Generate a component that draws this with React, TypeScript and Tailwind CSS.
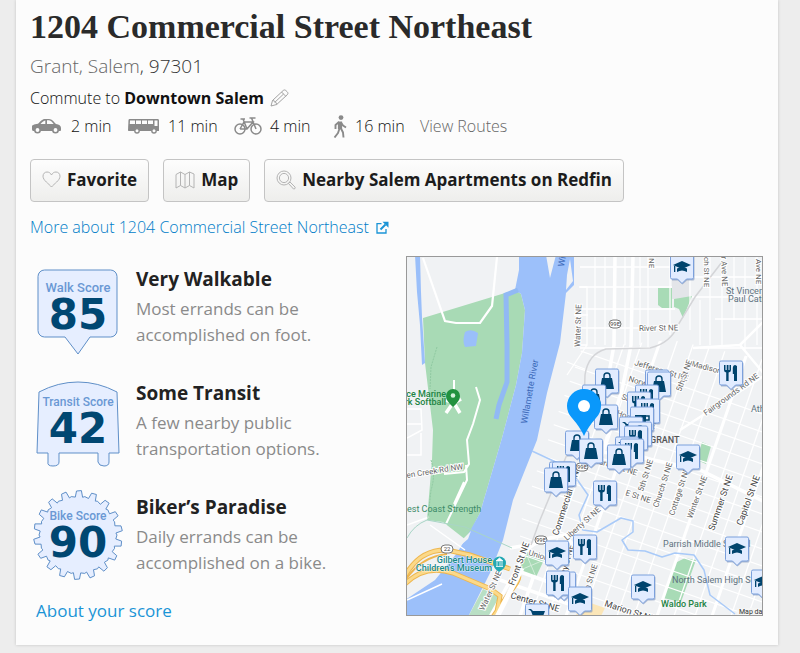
import React from "react";

type Kind = "bag" | "fork" | "grad" | "cup" | "cart";

function CarIcon() {
  return (
    <svg width="29" height="16" viewBox="0 0 29 16" className="shrink-0" aria-hidden="true">
      <path d="M0 11V8.5C0 7.300 1.500 6.500 6 5.800C8.500 3.500 10 1 13 1h4c3 0 5 3 7 5c3 .4 5 1.600 5 4v2.200c0 .5-.4.8-1 .8H1.200C.5 13 0 12.200 0 11Z" fill="#8a8a8a" />
      <path d="M8.500 6c1.500-1.700 3-3.400 4.800-3.600V6ZM15 2.300h2c2 .2 3.300 2 4.700 3.700H15Z" fill="#fcfcfc" />
      <circle cx="5.500" cy="12" r="2.700" fill="#fcfcfc" stroke="#8a8a8a" strokeWidth="1.600" />
      <circle cx="23.500" cy="12" r="2.700" fill="#fcfcfc" stroke="#8a8a8a" strokeWidth="1.600" />
    </svg>
  );
}

function BusIcon() {
  return (
    <svg width="32" height="16" viewBox="0 0 32 16" className="shrink-0" aria-hidden="true">
      <path d="M1.500 1h28c1 0 1.500.6 1.500 1.500V13H1c-.6 0-1-.3-1-1l.5-10C.6 1.300 1 1 1.500 1Z" fill="#8a8a8a" />
      <path d="M2 2.500h5V6H1.800ZM8 2.500h5V6H8ZM14 2.500h5V6h-5ZM20 2.500h5V6h-5ZM26.500 2.500h3V8h-3Z" fill="#fcfcfc" />
      <circle cx="9" cy="12.800" r="2.200" fill="#fcfcfc" stroke="#8a8a8a" strokeWidth="1.400" />
      <circle cx="26" cy="12.800" r="2.200" fill="#fcfcfc" stroke="#8a8a8a" strokeWidth="1.400" />
    </svg>
  );
}

function BikeIcon() {
  return (
    <svg width="28" height="18" viewBox="0 0 28 18" className="shrink-0" fill="none" stroke="#8a8a8a" strokeWidth="1.500" aria-hidden="true">
      <circle cx="6" cy="12" r="5" />
      <circle cx="22" cy="12" r="5" />
      <path d="M6 12 10 5h9l-6 7H6M9 2l4 10M6.500 2H11M22 12 17.500 1H15.500M17.500 1h4" />
    </svg>
  );
}

function WalkIcon() {
  return (
    <svg width="14" height="23" viewBox="0 0 14 23" className="shrink-0" aria-hidden="true">
      <circle cx="8" cy="2.600" r="2.400" fill="#8a8a8a" />
      <path d="M7 6.500v7.500" stroke="#8a8a8a" strokeWidth="4.200" fill="none" />
      <path d="M6 7 2.500 10v4M8 7.500l2 3 3 2M6.500 13.500 5 18l-3.500 4.500M8 13.500l2 4 .5 5" stroke="#8a8a8a" strokeWidth="1.900" fill="none" strokeLinejoin="round" />
    </svg>
  );
}

function PencilIcon() {
  return (
    <svg width="19" height="18" viewBox="0 0 19 18" fill="none" stroke="#999" strokeWidth=".9" strokeLinejoin="round" aria-hidden="true">
      <path d="M1 17 2.500 11.500 13 1.700c1-1 2-1 3 0l1.200 1.100c1 1 1 2 0 3L6.700 15.500ZM2.500 11.500c2 0 4 2 4.200 4M11.500 3l4.200 4.200M4.600 13.500l9-8.500" />
    </svg>
  );
}

function HeartIcon() {
  return (
    <svg width="19" height="17" viewBox="0 0 19 17" fill="none" stroke="#b4b4b4" strokeWidth="1" strokeLinejoin="round" aria-hidden="true">
      <path d="M9.500 16C7 12.800 1 9.500 1 5.200C1 2.700 2.800 1 5 1c2 0 3.600 1.100 4.500 3C10.400 2.100 12 1 14 1c2.200 0 4 1.700 4 4.200c0 4.300-6 7.600-8.500 10.800Z" />
    </svg>
  );
}

function MapIcon() {
  return (
    <svg width="20" height="18" viewBox="0 0 20 18" fill="none" stroke="#b4b4b4" strokeWidth="1" strokeLinejoin="round" aria-hidden="true">
      <path d="M1 3.500 5.500 1 10 3.500 14.500 1 19 3v14l-4.500-2.500L10 17l-4.500-2.500L1 17ZM5.500 1v13.500M10 3.500V17M14.500 1v13.500" />
    </svg>
  );
}

function SearchIcon() {
  return (
    <svg width="20" height="20" viewBox="0 0 20 20" fill="none" stroke="#b4b4b4" strokeWidth="1" strokeLinejoin="round" aria-hidden="true">
      <circle cx="8" cy="8" r="7" />
      <circle cx="8" cy="8" r="4.600" />
      <path d="m12.500 13.500 1.500-1.500 5.200 5.200q.3 2-1.700 1.800Z" />
    </svg>
  );
}

function ExternalIcon() {
  return (
    <svg width="13" height="13" viewBox="0 0 13 13" fill="none" stroke="#1a94d6" strokeWidth="1.300" aria-hidden="true">
      <path d="M5.500 2.700H1v9.300h9V8" />
      <path d="m4.500 8.500 5-5" strokeWidth="2" />
      <path d="M6.500.7H12.500V6.700Z" fill="#1a94d6" stroke="none" />
    </svg>
  );
}

const gearPath = (() => {
  const teeth = 18;
  const points: string[] = [];
  const profile: [number, number][] = [[0, 39], [0.3, 38], [0.4, 44], [0.72, 44.5], [0.85, 38]];
  for (let i = 0; i < teeth; i++) {
    for (const [offset, radius] of profile) {
      const a = ((i + offset) / teeth) * Math.PI * 2;
      points.push(`${(48 + radius * Math.cos(a)).toFixed(1)} ${(42 + radius * Math.sin(a)).toFixed(1)}`);
    }
  }
  return `M${points.join("L")}Z`;
})();

const shapes = {
  walk: "M14.500 5h66a6.500 6.500 0 0 1 6.500 6.500v54a6.500 6.500 0 0 1-6.500 6.500H60L48 89 35 72H14.500a6.500 6.500 0 0 1-6.500-6.500V11.500A6.500 6.500 0 0 1 14.500 5Z",
  transit: "M9 13Q28 3 48 3T87 13L89 74H79v9q0 4-5 4t-6-4V74H29v9q0 4-6 4t-5-4V74H7Z",
  bike: gearPath,
};

function Badge({ shape, name, score }: { shape: keyof typeof shapes; name: string; score: number }) {
  return (
    <svg width="94" height="92" viewBox="0 0 94 92" className="shrink-0 overflow-visible" role="img" aria-label={`${name} ${score}`}>
      <path d={shapes[shape]} fill="#e6eeff" stroke="#5f8fc8" strokeWidth="1" strokeLinejoin="round" />
      <text
        x="48"
        y="27"
        textAnchor="middle"
        className={`fill-[#6a98d4] font-['Roboto',sans-serif] font-medium ${shape === "walk" ? "text-[13px]" : "text-[12px]"}`}
      >
        {name}
      </text>
      <text x="48" y="64" textAnchor="middle" className="fill-[#004772] font-['DejaVu_Sans',sans-serif] text-[42px] font-bold">
        {score}
      </text>
    </svg>
  );
}

const scores = [
  { shape: "walk", name: "Walk Score", score: 85, title: "Very Walkable", text: "Most errands can be accomplished on foot." },
  { shape: "transit", name: "Transit Score", score: 42, title: "Some Transit", text: "A few nearby public transportation options." },
  { shape: "bike", name: "Bike Score", score: 90, title: "Biker’s Paradise", text: "Daily errands can be accomplished on a bike." },
] as const;

const glyphs: Record<Kind, React.ReactNode> = {
  bag: (
    <>
      <path d="M-5-3H5L7 8H-7Z" fill="#00446e" />
      <path d="M-3-2v-3a3 3 0 0 1 6 0v3" fill="none" stroke="#00446e" strokeWidth="1.400" />
    </>
  ),
  fork: (
    <path d="M-7-8v5q0 2 2.200 2.600V8h2.400V-.4Q0-1 0-3v-5h-1.500v5h-1v-5h-1.800v5h-1.200v-5ZM3 8V1H1.800v-6q.2-3 2.400-3l1.800 1V8Z" fill="#00446e" />
  ),
  grad: (
    <>
      <path d="M-9-2 0-6 9-2 0 2Z" fill="#00446e" />
      <path d="M-5 1.500Q0-1 5 1.500V5Q0 2-5 5ZM-8-1h1.300v6H-8Z" fill="#00446e" />
    </>
  ),
  cup: (
    <>
      <path d="M-7-4H4V2Q4 5 1 5h-5q-3 0-3-3Z" fill="#00446e" />
      <path d="M4-3h3v4H3" fill="none" stroke="#00446e" strokeWidth="1.500" />
    </>
  ),
  cart: <path d="M-9-7h3l2 2H8L5 3h-8L-6-5M-3 5h2v2h-2ZM3 5h2v2H3Z" fill="#00446e" />,
};

const markers: [Kind, number, number][] = [
  ["grad", 682, 267], ["fork", 731, 373], ["bag", 607, 381], ["bag", 594, 397], ["fork", 657, 382], ["bag", 659, 384],
  ["fork", 647, 397], ["fork", 639, 404], ["fork", 648, 411], ["cup", 642, 419], ["cart", 631, 429], ["bag", 640, 434],
  ["fork", 636, 438], ["bag", 606, 417], ["bag", 577, 443], ["cart", 627, 449], ["fork", 632, 451], ["bag", 591, 451],
  ["bag", 619, 457], ["cart", 561, 474], ["fork", 564, 474], ["bag", 556, 480], ["grad", 688, 457], ["fork", 605, 493],
  ["fork", 585, 547], ["grad", 557, 553], ["fork", 564, 584], ["fork", 558, 583], ["grad", 580, 599], ["grad", 737, 549],
  ["grad", 643, 587], ["grad", 763, 582], ["cart", 537, 616],
];

function Marker({ kind, x, y }: { kind: Kind; x: number; y: number }) {
  return (
    <g transform={`translate(${x} ${y})`}>
      <path d="M-10-11H11q1.500 0 1.500 1.500V12q0 1.500-1.500 1.500H5L.5 17.500-4 13.500h-6" fill="#7d93bb" opacity=".6" />
      <path d="M-10-12H10q1.500 0 1.500 1.500v21q0 1.500-1.500 1.500H4.500L0 16.500-4.500 12H-10q-1.500 0-1.500-1.500v-21Q-11.500-12-10-12Z" fill="#e2ecff" stroke="#7ba0dc" strokeWidth="1" />
      {glyphs[kind]}
    </g>
  );
}

const avenues = [531, 548, 566, 583, 600, 617, 634, 657, 674, 695, 712, 731, 748, 765, 785, 803, 822, 842];
const crossings = [348, 366, 382, 398, 416, 431, 448, 466, 483, 500, 519, 536, 554, 572, 590];

const streets: { text: string; x: number; y: number; angle: number; size?: 8 | 9; dark?: boolean }[] = [
  { text: "Water St NE", x: 580, y: 347, angle: -88 },
  { text: "River St NE", x: 639, y: 331, angle: -1 },
  { text: "NE", x: 649, y: 258, angle: 90 },
  { text: "arch St NE", x: 704, y: 250, angle: 90 },
  { text: "or Ave NE", x: 721, y: 252, angle: 88 },
  { text: "Ave NE", x: 756, y: 259, angle: 90 },
  { text: "Jefferson St NE", x: 634, y: 365, angle: 17 },
  { text: "Norway St", x: 628, y: 381, angle: 17 },
  { text: "Shipping", x: 621, y: 399, angle: 20 },
  { text: "Madison St", x: 691, y: 366, angle: 15 },
  { text: "5th St NE", x: 681, y: 392, angle: -70 },
  { text: "Fairgrounds Rd NE", x: 706, y: 416, angle: -36 },
  { text: "Hood St NE", x: 616, y: 415, angle: 20 },
  { text: "Market St NE", x: 592, y: 462, angle: 17 },
  { text: "Commercial St NE", x: 558, y: 536, angle: -72, size: 9, dark: true },
  { text: "5th St NE", x: 643, y: 492, angle: -72 },
  { text: "Church St NE", x: 658, y: 508, angle: -72 },
  { text: "Cottage St NE", x: 674, y: 516, angle: -72 },
  { text: "Winter St NE", x: 692, y: 519, angle: -70 },
  { text: "Summer St NE", x: 714, y: 531, angle: -71, size: 9, dark: true },
  { text: "Capitol St NE", x: 742, y: 526, angle: -70, size: 9, dark: true },
  { text: "E St NE", x: 625, y: 495, angle: 18 },
  { text: "Liberty St NE", x: 567, y: 541, angle: -42 },
  { text: "Liberty St NE", x: 562, y: 590, angle: -75, dark: true },
  { text: "12th St NE", x: 586, y: 601, angle: -72 },
  { text: "Union", x: 528, y: 555, angle: 16 },
  { text: "Front St NE", x: 514, y: 586, angle: -70, size: 9, dark: true },
  { text: "Water St NE", x: 484, y: 611, angle: -65 },
  { text: "Center St NE", x: 510, y: 598, angle: 16, size: 9, dark: true },
  { text: "Marion St NE", x: 604, y: 606, angle: 18, size: 9, dark: true },
  { text: "en Creek Rd NW", x: 407, y: 478, angle: -9 },
];

function Shield({ x, y, text }: { x: number; y: number; text: string }) {
  return (
    <g>
      <rect x={x - 6} y={y - 4} width="12" height="8" rx="4" fill="#fff" stroke="#777" />
      <text x={x} y={y + 2} textAnchor="middle" className="fill-[#444] text-[6px]">{text}</text>
    </g>
  );
}

function ScoreMap() {
  return (
    <svg viewBox="407 257 355 358" preserveAspectRatio="xMidYMid slice" className="block size-full font-['Roboto',sans-serif]" role="img" aria-label="Map of nearby amenities">
      <defs>
        <clipPath id="east">
          <path d="M583 345 615 345 672 340 765 360V620H490L537 470Z" />
        </clipPath>
      </defs>
      <rect x="400" y="250" width="370" height="370" fill="#f0f2f4" />
      <path d="M672 277h17v22h-17Z" fill="#e3e5e9" />
      <path d="M658 288h14v20h-10l-4-3ZM674 299l18-3-9 22-4-9-5-2ZM702 442l9 4-5 18-9-4ZM675 563l10-5 11 2-15 42-18-4Z" fill="#a8dbb6" />
      <path d="M423 318 515 290 521 294 525 310 522 353 516 385 502 438 480 513 466 540 443 522 427 520 432 460 433 430 425 363Z" fill="#a8dab5" />
      <path d="M415 255h5l1 37 1 25 3 46-3 2-2-40-3-33Z" fill="#9abffa" />
      <path d="M519 255H574V285L566 293 560 343 547 393 537 440 533 450 513 500 503 540 490 573 468 617H405V600L435 580 457 553 466 538 480 513 502 438 516 385 522 353 525 310 521 294 515 290 519 270Z" fill="#9cc0fa" />
      <path d="M546 255l4 23 6-23ZM570 259l3 22-7 9 1-15ZM463 539l8-8-3 8-7 6Z" fill="#f0f2f4" />
      <path d="M518 290 506 295 507 345 507 382 499 405 496 419" fill="none" stroke="#91b9f4" strokeWidth="5" />
      <path d="M465 332q6-4 13 1l-2 13-11 1q-3-5 0-15Z" fill="#9abffa" />
      <path d="M468 617 483 589 499 597 495 617Z" fill="#b9dfc4" />
      <path d="M525 551 544 560 536 577 518 571Z" fill="#a8dab5" />
      <path d="m525 551 11 26M544 560l-26 11" stroke="#d3ecd9" />

      <g fill="none" stroke="#fff" strokeWidth="1.700">
        <path d="M580 267H675M580 287H672M580 309H675M580 328H672M580 348H650M672 277H763M692 297H763M715 319H763M700 348H763" />
        <path d="M595 256V345M648 256V348M670 256V335M690 256V330M700 300V345M710 256V345M722 256V345M734 256V320M745 256V350M757 256V345M640 256V345M625 256V345M605 256V345" strokeWidth="1.200" />
        <path d="M615 256 614 345 606 390M633 256 631 345 622 390 600 460" strokeWidth="3.500" />
        <path d="M575 345h12V287h-8M567 375l20-30M574 315h14M567 362l20 8" strokeWidth="1.300" />
        <path d="M423 258 445 321 456 323 480 323 492 306 497 257" strokeWidth="2.200" />
        <path d="M454 380v24" strokeWidth="2" />
        <path d="M446 400l8 3 7-4M453 403l-7 10M454 403l6 10" strokeWidth="3.500" />
        <path d="M476 387l4 13-7 24-6 16 2 24-5 8-20 2M466 465l1 15-21 44M464 482l-10 22" strokeWidth="2" />
        <path d="M406 409h15l1 21-15 8M406 424h15M407 455h14v-22M407 525l22-8M430 525l35 25M407 600l35-16" strokeWidth="1.500" />
        <path d="M693 348 740 345 765 375M740 345l25-25M680 430 765 375" strokeWidth="2.500" />
        <g clipPath="url(#east)">
          {avenues.map((x) => (
            <path key={x} d={`M${x} 616 L${x + 96} 336`} strokeWidth={x === 657 || x === 712 || x === 566 ? 3 : 1.3} />
          ))}
          {crossings.map((y) => (
            <path key={y} d={`M520 ${y - 18} L780 ${y + 72}`} strokeWidth="1.200" />
          ))}
        </g>
        <path d="M490 617 520 563Q525 544 550 538L565 535 581 555M510 548 528 545M518 571 590 597M500 580 600 615M534 575l-14 41M580 450 630 455 700 470 765 502" strokeWidth="3.500" />
      </g>

      <path d="M583 435 585 375Q588 354 606 349L650 348Q671 343 678 325L695 297 722 262M573 440 540 520 531 545" fill="none" stroke="#d4d5d8" strokeWidth="1.500" />
      <path d="M532 451 560 464M576 478 588 495 579 515 583 530 597 532 621 518 633 521 633 532 622 540 628 550 645 551 662 557 675 553 694 555 704 570 710 595 735 614" fill="none" stroke="#a9caf8" strokeWidth="1.500" strokeLinejoin="round" />
      <path d="M427 520Q414 525 407 538M427 520 465 527 512 548" fill="none" stroke="#a8d5c6" />
      <path d="M431 460q5 15 0 30l-3 28M437 347l-6 20-1 22" fill="none" stroke="#8fc9a1" strokeDasharray="2 1" />

      <g fill="none">
        <path d="M405 576Q420 549 447 550L470 555 510 569M405 584Q425 564 453 573L493 590M493 617 515 585Q522 575 516 573M488 587 500 596 496 617" stroke="#eeb64e" strokeWidth="5" />
        <path d="M405 576Q420 549 447 550L470 555 510 569M405 584Q425 564 453 573L493 590M493 617 515 585Q522 575 516 573M488 587 500 596 496 617" stroke="#fbd98a" strokeWidth="3" />
        <path d="M405 581Q420 557 447 554" stroke="#eeb64e" strokeWidth="2" />
        <path d="M497 617 522 568" stroke="#fff" strokeWidth="5" />
      </g>
      <path d="M582 600l23 8-5 10h-25Z" fill="#fbe6b8" />

      {streets.map((s, i) => (
        <text
          key={i}
          transform={`translate(${s.x} ${s.y}) rotate(${s.angle})`}
          className={`${s.size === 9 ? "text-[9px]" : "text-[8px]"} ${s.dark ? "fill-[#444]" : "fill-[#666]"} stroke-white stroke-[2px] [paint-order:stroke]`}
        >
          {s.text}
        </text>
      ))}
      <text transform="translate(527 424) rotate(-80)" className="fill-[#3a68b8] text-[9px]">Willamette River</text>
      <text transform="translate(564 267) rotate(-80)" className="fill-[#3a68b8] text-[9px]">Wi</text>

      <g className="fill-[#607280] text-[9px]">
        <text x="726" y="294">St Vincent de</text>
        <text x="728" y="302">Paul Catholic</text>
        <text x="751" y="412">Athletic</text>
        <text x="663" y="547">Parrish Middle School</text>
        <text x="672" y="583">North Salem High School</text>
      </g>
      <text x="650" y="443" className="fill-[#555] text-[9px] font-medium">GRANT</text>
      <g className="fill-[#208343] text-[9px] font-medium">
        <text x="446" y="397" textAnchor="end">Wallace Marine</text>
        <text x="446" y="405" textAnchor="end">Park Softball</text>
        <text x="661" y="607">Waldo Park</text>
      </g>
      <text x="407" y="512" className="fill-[#3d8a68] text-[9px]">est Coast Strength</text>
      <g className="fill-[#168a8a] stroke-white/70 stroke-[1px] text-[9px] font-medium [paint-order:stroke]">
        <text x="492" y="563" textAnchor="end">Gilbert House</text>
        <text x="492" y="571" textAnchor="end">Children&apos;s Museum</text>
      </g>
      <path d="M499 572q-6-4-6-9a6.500 6.500 0 0 1 13 0q0 5-7 9Z" fill="#22a8b3" />
      <path d="M496 561h7l-3.500-3ZM497 562v4M500 562v4M502 562v4M496 566.500h7" fill="#fff" stroke="#fff" strokeWidth=".8" />
      <path d="M453 407q-7-6-7-11a7 7 0 0 1 14 0q0 5-7 11Z" fill="#22923f" />
      <circle cx="453" cy="395.500" r="2.300" fill="#d5f2dc" />

      <Shield x={615} y={324} text="99E" />
      <Shield x={582} y={467} text="99E" />
      <Shield x={541} y={540} text="99E" />
      <Shield x={447} y={549} text="22" />

      {markers.map(([kind, x, y], i) => (
        <Marker key={i} kind={kind} x={x} y={y} />
      ))}
      <path d="M584 436Q580 427 572 418A17 17 0 1 1 596 418Q588 427 584 436Z" fill="#0a98fb" />
      <circle cx="584" cy="406" r="6" fill="#fff" />
      <rect x="737" y="608" width="30" height="10" fill="#f5f5f5" opacity=".8" />
      <text x="739" y="614" className="fill-[#333] text-[7px]">Map data</text>
    </svg>
  );
}

const buttonClass =
  "flex h-[43px] items-center rounded-[4px] border border-[#c4c4c4] bg-linear-to-b from-[#fdfdfd] to-[#eeeeec] px-[11px] pb-[2px] text-[17px] font-bold text-[#1c1c1c]";

export default function App() {
  return (
    <div className="min-h-screen bg-[#ededed] pr-[22px] pl-4 font-['Open_Sans',sans-serif] text-[#333]">
      <main className="bg-[#fcfcfc] pr-[15px] pb-[22px] pl-[14px] shadow-[0_0_3px_rgba(0,0,0,0.18)]">
        <h1 className="font-['Liberation_Serif',serif] text-[34px] leading-[54px] font-bold text-[#2a2a2a]">
          1204 Commercial Street Northeast
        </h1>
        <p className="text-[19px] leading-6 font-light">
          <a href="#grant" className="text-[#666]">Grant</a>
          <span className="text-[#666]">, </span>
          <a href="#salem" className="text-[#666]">Salem</a>, 97301
        </p>
        <div className="mt-2 flex h-6 items-center gap-[6px] text-[16px] font-light text-[#111]">
          <p>
            Commute to <strong className="font-bold">Downtown Salem</strong>
          </p>
          <button type="button" aria-label="Edit commute"><PencilIcon /></button>
        </div>
        <div className="mt-1 flex h-6 items-center text-[16px] font-light text-[#111]">
          <span className="flex w-[98px] items-center gap-[10px] pl-[2px]"><CarIcon />2 min</span>
          <span className="flex w-[106px] items-center gap-2"><BusIcon />11 min</span>
          <span className="flex w-[99px] items-center gap-2"><BikeIcon />4 min</span>
          <span className="flex w-[87px] items-center gap-2"><WalkIcon />16 min</span>
          <a href="#routes" className="text-[#666]">View Routes</a>
        </div>
        <div className="mt-[21px] flex gap-[14px]">
          <button type="button" className={`${buttonClass} gap-[6px]`}><HeartIcon />Favorite</button>
          <button type="button" className={`${buttonClass} gap-[6px]`}><MapIcon />Map</button>
          <button type="button" className={`${buttonClass} gap-[6px]`}><SearchIcon />Nearby Salem Apartments on Redfin</button>
        </div>
        <a href="#more" className="mt-[13px] flex h-6 items-center gap-[7px] text-[16px] font-light text-[#007cc8]">
          More about 1204 Commercial Street Northeast
          <ExternalIcon />
        </a>
        <div className="mt-[17px] flex">
          <section className="w-[376px] shrink-0 pt-[9px]">
            <div className="flex flex-col gap-[22px]">
              {scores.map((s) => (
                <div key={s.name} className="flex h-[92px] gap-3">
                  <Badge shape={s.shape} name={s.name} score={s.score} />
                  <div className="w-[212px]">
                    <h2 className="text-[19px] leading-7 font-bold text-[#222]">{s.title}</h2>
                    <p className="mt-[3px] text-[17px] leading-[26px] text-[#8a8a8a]">{s.text}</p>
                  </div>
                </div>
              ))}
            </div>
            <a href="#about" className="mt-[14px] ml-[6px] inline-block text-[17px] leading-6 text-[#1a94d6]">About your score</a>
          </section>
          <div className="h-[360px] min-w-0 flex-1 overflow-hidden border border-[#999]">
            <ScoreMap />
          </div>
        </div>
      </main>
    </div>
  );
}
